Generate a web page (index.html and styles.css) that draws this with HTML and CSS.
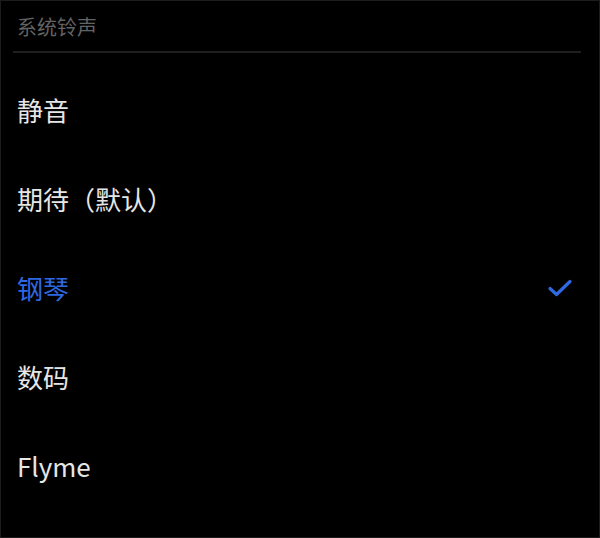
FILE: index.html
```html
<!DOCTYPE html>
<html lang="zh-CN">
<head>
<meta charset="utf-8">
<title>系统铃声</title>
<link rel="stylesheet" href="styles.css">
</head>
<body>
<div class="screen">
  <div class="header">系统铃声</div>
  <div class="divider"></div>
  <ul class="list">
    <li class="item">静音</li>
    <li class="item">期待（默认）</li>
    <li class="item selected">钢琴
      <svg class="check" width="26" height="20" viewBox="0 0 26 20"><path d="M3 10.5 L9.5 16.5 L23 3.5" fill="none" stroke="#2f68e3" stroke-width="3.2" stroke-linecap="round" stroke-linejoin="round"/></svg>
    </li>
    <li class="item">数码</li>
    <li class="item">Flyme</li>
  </ul>
</div>
</body>
</html>
```
FILE: styles.css
```css
html, body {
  margin: 0;
  padding: 0;
  background: #000;
}
.screen {
  box-sizing: border-box;
  width: 600px;
  height: 538px;
  border: 1px solid #1c1c1c;
  background: #000;
  font-family: "Noto Sans CJK SC", "Noto Sans", sans-serif;
  overflow: hidden;
}
.header {
  height: 50px;
  display: flex;
  align-items: center;
  padding-left: 16px;
  font-size: 20px;
  color: #636363;
}
.divider {
  height: 2px;
  background: #1f1f1f;
  margin: 0 18px 0 12px;
}
.list {
  list-style: none;
  margin: 0;
  padding: 12px 0 0 0;
}
.item {
  height: 89px;
  display: flex;
  align-items: center;
  justify-content: space-between;
  padding: 0 26px 0 16px;
  font-size: 26px;
  color: #e6e6e6;
}
.item.selected {
  color: #2f68e3;
}
.check {
  display: block;
}
```
